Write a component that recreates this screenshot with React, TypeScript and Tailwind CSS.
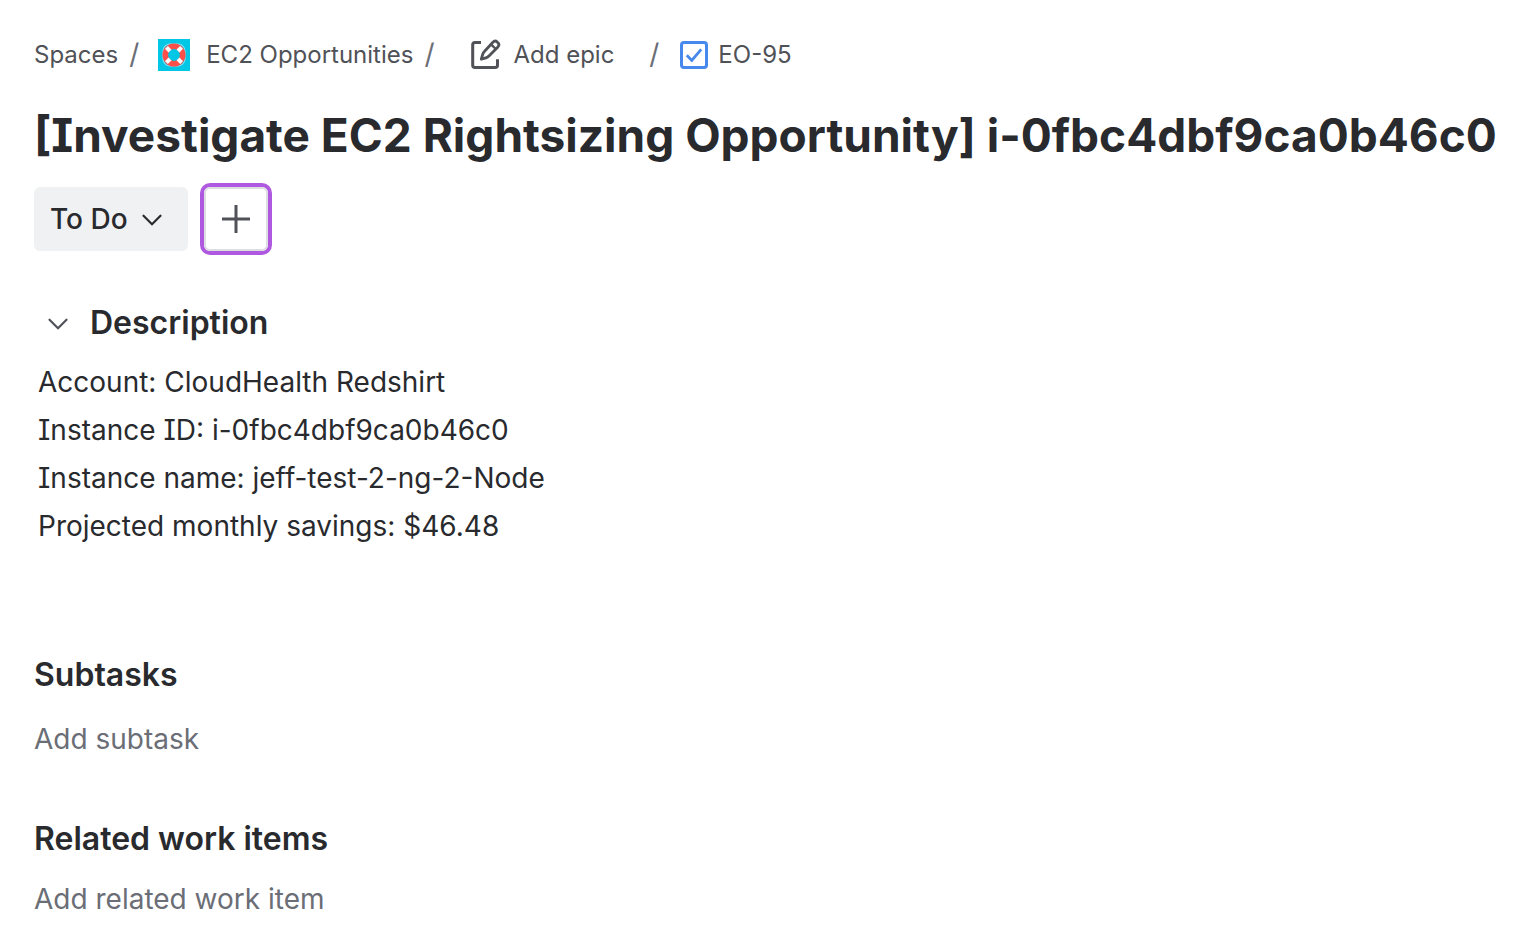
import React from "react";

const details = [
  { label: "Account", value: "CloudHealth Redshirt" },
  { label: "Instance ID", value: "i-0fbc4dbf9ca0b46c0" },
  { label: "Instance name", value: "jeff-test-2-ng-2-Node" },
  { label: "Projected monthly savings", value: "$46.48" },
];

function Separator() {
  return (
    <span aria-hidden="true" className="mr-4 ml-2 w-4 text-center text-[28px] text-[#6b6e76]">
      /
    </span>
  );
}

function SpaceLogo() {
  return (
    <svg width="32" height="32" viewBox="0 0 32 32" aria-hidden="true">
      <rect width="32" height="32" fill="#00c7e5" />
      <rect x="5" y="5" width="22" height="22" rx="7" fill="none" stroke="#a5e3ee" strokeWidth="1" />
      <circle cx="16" cy="16" r="8.7" fill="none" stroke="#ff4f4b" strokeWidth="5.6" />
      <g stroke="#fff" strokeWidth="4">
        <path d="M12 12L8.4 8.4" />
        <path d="M20 12l3.6-3.6" />
        <path d="M20 20l3.6 3.6" />
        <path d="M12 20l-3.6 3.6" />
      </g>
    </svg>
  );
}

function EditIcon() {
  return (
    <svg width="32" height="32" viewBox="0 0 32 32" fill="none" stroke="#505258" strokeWidth="3" aria-hidden="true">
      <path d="M12 3.5H6A2.3 2.3 0 0 0 3.7 5.8v20.4A2.3 2.3 0 0 0 6 28.5h20.2a2.3 2.3 0 0 0 2.3-2.3V20.3" />
      <path
        strokeWidth="2.8"
        strokeLinejoin="round"
        d="M12.3 20.2l1.3-4.6c.4-1.3 1-2.4 2-3.4l8.3-8.9c1.2-1.3 3.1-1.4 4.4-.2l.4.4c1.3 1.2 1.4 3.1.2 4.4l-8.7 8.9c-.9.9-2 1.6-3.3 2z"
      />
      <path strokeWidth="2.4" d="M22 5.3l4.8 4.7" />
    </svg>
  );
}

function TaskIcon() {
  return (
    <svg width="28" height="28" viewBox="0 0 28 28" fill="none" stroke="#4688ec" strokeWidth="3" aria-hidden="true">
      <rect x="1.5" y="1.5" width="25" height="25" rx="2.5" />
      <path strokeWidth="2.8" d="M6.8 14.2l5 5.2 9.4-11" />
    </svg>
  );
}

function Chevron() {
  return (
    <svg
      width="24"
      height="24"
      viewBox="0 0 24 24"
      fill="none"
      stroke="currentColor"
      strokeWidth="2.2"
      strokeLinecap="round"
      aria-hidden="true"
    >
      <path d="M3.5 8.7l8.5 8.5 8.5-8.5" />
    </svg>
  );
}

export default function App() {
  return (
    <main className="min-h-screen bg-white pt-9 pr-6 pl-[34px] font-['Inter',sans-serif] text-[#292a2e] [font-feature-settings:'cv08']">
      <nav aria-label="Breadcrumb" className="flex h-[38px] items-center text-2xl text-[#505258]">
        <a href="#spaces">Spaces</a>
        <Separator />
        <a href="#ec2-opportunities" className="flex items-center gap-4">
          <SpaceLogo />
          EC2 Opportunities
        </a>
        <Separator />
        <button type="button" className="flex items-center gap-3 pr-6 pl-4">
          <EditIcon />
          Add epic
        </button>
        <Separator />
        <a href="#EO-95" className="flex items-center gap-[10px] pl-[2px]">
          <TaskIcon />
          EO-95
        </a>
      </nav>

      <h1 className="mt-[29px] text-[46px] leading-[64px] font-bold">
        [Investigate EC2 Rightsizing Opportunity] i-0fbc4dbf9ca0b46c0
      </h1>

      <div className="mt-5 flex gap-4">
        <button
          type="button"
          className="flex h-16 items-center gap-3 rounded-[6px] bg-[#f0f1f2] pr-6 pl-4 text-[28px] font-medium"
        >
          To Do
          <Chevron />
        </button>
        <button
          type="button"
          aria-label="Add"
          className="flex size-16 items-center justify-center rounded-[6px] border-2 border-[#dddee1] text-[#505258] ring-4 ring-[#af59e1]"
        >
          <svg width="28" height="28" viewBox="0 0 28 28" fill="none" stroke="currentColor" strokeWidth="3" aria-hidden="true">
            <path d="M14 0v28M0 14h28" />
          </svg>
        </button>
      </div>

      <section className="mt-[52px]">
        <h2 className="text-[32px] leading-10 font-[620]">
          <button type="button" aria-expanded="true" className="flex items-center gap-5 pl-3">
            <span className="text-[#505258]">
              <Chevron />
            </span>
            Description
          </button>
        </h2>
        <div className="mt-[15px] px-1 text-[28px] leading-[48px]">
          {details.map((d) => (
            <p key={d.label}>
              {d.label}: {d.value}
            </p>
          ))}
        </div>
      </section>

      <section className="mt-[105px]">
        <h2 className="text-[32px] leading-10 font-[620]">Subtasks</h2>
        <button type="button" className="mt-6 block text-[28px] leading-10 text-[#6b6e76]">
          Add subtask
        </button>
      </section>

      <section className="mt-[60px]">
        <h2 className="text-[32px] leading-10 font-[620]">Related work items</h2>
        <button type="button" className="mt-5 block text-[28px] leading-10 text-[#6b6e76]">
          Add related work item
        </button>
      </section>
    </main>
  );
}
